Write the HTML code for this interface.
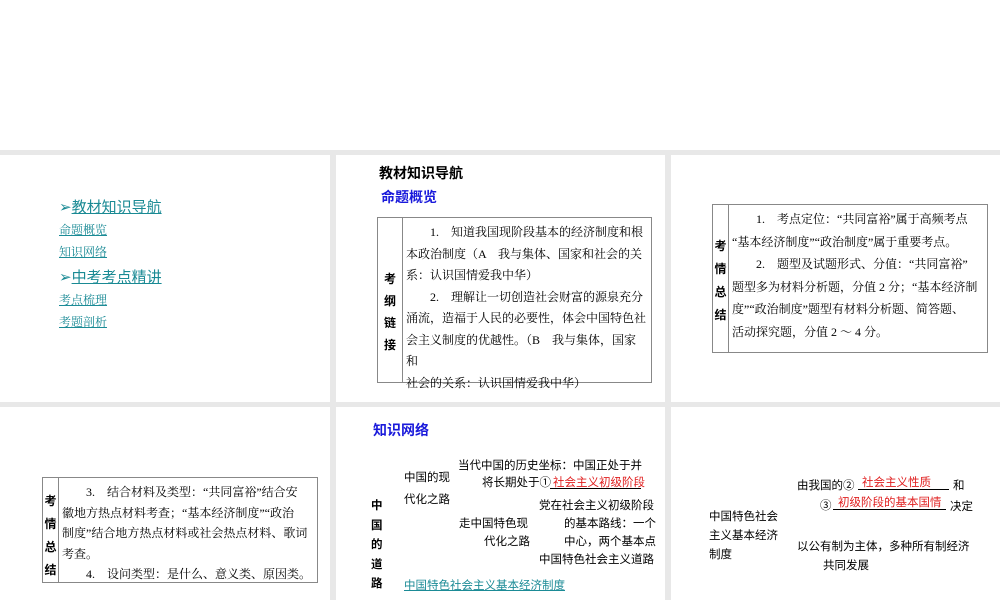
<!DOCTYPE html>
<html><head><meta charset="utf-8"><style>
*{margin:0;padding:0;box-sizing:border-box}
body{width:1000px;height:600px;background:#fff;position:relative;overflow:hidden;font-family:"Liberation Serif","Noto Serif CJK SC","Noto Sans CJK SC",serif;color:#000}
.g{position:absolute;background:#e8e8e8}
.a{position:absolute;white-space:nowrap}
.s{font-family:"Liberation Sans","Noto Sans CJK SC",sans-serif}
.lk{color:#1b8b96;text-decoration:underline;font-size:12px}
.hb{color:#1a8a94;text-decoration:underline;font-size:15px}
.tb{position:absolute;border:1px solid #888}
.tb .l{position:absolute;top:0;bottom:0;left:0;border-right:1px solid #888;font-weight:bold;font-size:12px;text-align:center}
.t{font-size:12px;line-height:21.5px;white-space:nowrap}
.blue{color:#1a1adb;font-weight:bold;font-size:14px}
.red{color:#e02020;font-size:11.5px}
.u{position:absolute;border-bottom:1px solid #000}
</style></head><body>
<div class="g" style="left:0;top:150px;width:1000px;height:5px"></div>
<div class="g" style="left:0;top:402px;width:1000px;height:5px"></div>
<div class="g" style="left:330px;top:150px;width:6px;height:450px"></div>
<div class="g" style="left:665px;top:150px;width:6px;height:450px"></div>

<!-- panel 1 -->
<div class="a s" style="left:59px;top:196px;font-size:15px;color:#1a8a94">➢<span class="hb">教材知识导航</span></div>
<div class="a lk" style="left:59px;top:221px">命题概览</div>
<div class="a lk" style="left:59px;top:243px">知识网络</div>
<div class="a s" style="left:59px;top:266px;font-size:15px;color:#1a8a94">➢<span class="hb">中考考点精讲</span></div>
<div class="a lk" style="left:59px;top:291px">考点梳理</div>
<div class="a lk" style="left:59px;top:313px">考题剖析</div>

<!-- panel 2 -->
<div class="a s" style="left:379px;top:163px;font-size:14px;font-weight:bold">教材知识导航</div>
<div class="a s blue" style="left:381px;top:187px">命题概览</div>
<div class="tb" style="left:377px;top:217px;width:275px;height:166px">
<div class="l s" style="width:25px;padding-top:50px;line-height:22px">考<br>纲<br>链<br>接</div>
<div class="a t" style="left:28px;top:4px">　　1.　知道我国现阶段基本的经济制度和根<br>本政治制度（A　我与集体、国家和社会的关<br>系：认识国情爱我中华）<br>　　2.　理解让一切创造社会财富的源泉充分<br>涌流，造福于人民的必要性，体会中国特色社<br>会主义制度的优越性。（B　我与集体，国家<br>和<br>社会的关系：认识国情爱我中华）</div>
</div>

<!-- panel 3 -->
<div class="tb" style="left:712px;top:204px;width:276px;height:149px">
<div class="l s" style="width:16px;padding-top:30px;line-height:23px">考<br>情<br>总<br>结</div>
<div class="a t" style="left:19px;top:3px;line-height:22.5px">　　1.　考点定位：“共同富裕”属于高频考点<br>“基本经济制度”“政治制度”属于重要考点。<br>　　2.　题型及试题形式、分值：“共同富裕”<br>题型多为材料分析题，分值 2 分；“基本经济制<br>度”“政治制度”题型有材料分析题、简答题、<br>活动探究题，分值 2 ～ 4 分。</div>
</div>

<!-- panel 4 -->
<div class="tb" style="left:42px;top:477px;width:276px;height:106px">
<div class="l s" style="width:16px;padding-top:12px;line-height:23px">考<br>情<br>总<br>结</div>
<div class="a t" style="left:19px;top:4px;line-height:20.5px">　　3.　结合材料及类型：“共同富裕”结合安<br>徽地方热点材料考查；“基本经济制度”“政治<br>制度”结合地方热点材料或社会热点材料、歌词<br>考查。<br>　　4.　设问类型：是什么、意义类、原因类。</div>
</div>

<!-- panel 5 -->
<div class="s" style="position:absolute;left:0;top:0;width:1000px;height:600px;font-size:11.5px">
<div class="a blue" style="left:373px;top:420px">知识网络</div>
<div class="a" style="left:404px;top:467px;line-height:22px">中国的现<br>代化之路</div>
<div class="a" style="left:458px;top:457px">当代中国的历史坐标：中国正处于并</div>
<div class="a" style="left:482px;top:474px">将长期处于①</div>
<div class="u" style="left:550px;top:473px;width:91px;height:16px"></div>
<div class="a red" style="left:553px;top:474px">社会主义初级阶段</div>
<div class="a" style="left:539px;top:497px">党在社会主义初级阶段</div>
<div class="a" style="left:459px;top:515px">走中国特色现</div>
<div class="a" style="left:564px;top:515px">的基本路线：一个</div>
<div class="a" style="left:484px;top:533px">代化之路</div>
<div class="a" style="left:564px;top:533px">中心，两个基本点</div>
<div class="a" style="left:539px;top:551px">中国特色社会主义道路</div>
<div class="a" style="left:371px;top:497px;font-weight:bold;line-height:19.5px;white-space:normal;width:14px">中<br>国<br>的<br>道<br>路</div>
<div class="a" style="left:404px;top:577px;color:#1b8b96;text-decoration:underline">中国特色社会主义基本经济制度</div>

<!-- panel 6 -->
<div class="a" style="left:709px;top:508px;line-height:19px">中国特色社会<br>主义基本经济<br>制度</div>
<div class="a" style="left:797px;top:477px">由我国的②</div>
<div class="u" style="left:858px;top:474px;width:91px;height:16px"></div>
<div class="a red" style="left:862px;top:474px">社会主义性质</div>
<div class="a" style="left:953px;top:477px">和</div>
<div class="a" style="left:820px;top:497px">③</div>
<div class="u" style="left:833px;top:494px;width:113px;height:16px"></div>
<div class="a red" style="left:838px;top:494px">初级阶段的基本国情</div>
<div class="a" style="left:950px;top:498px">决定</div>
<div class="a" style="left:797px;top:538px">以公有制为主体，多种所有制经济</div>
<div class="a" style="left:823px;top:557px">共同发展</div>
</div>
</body></html>
